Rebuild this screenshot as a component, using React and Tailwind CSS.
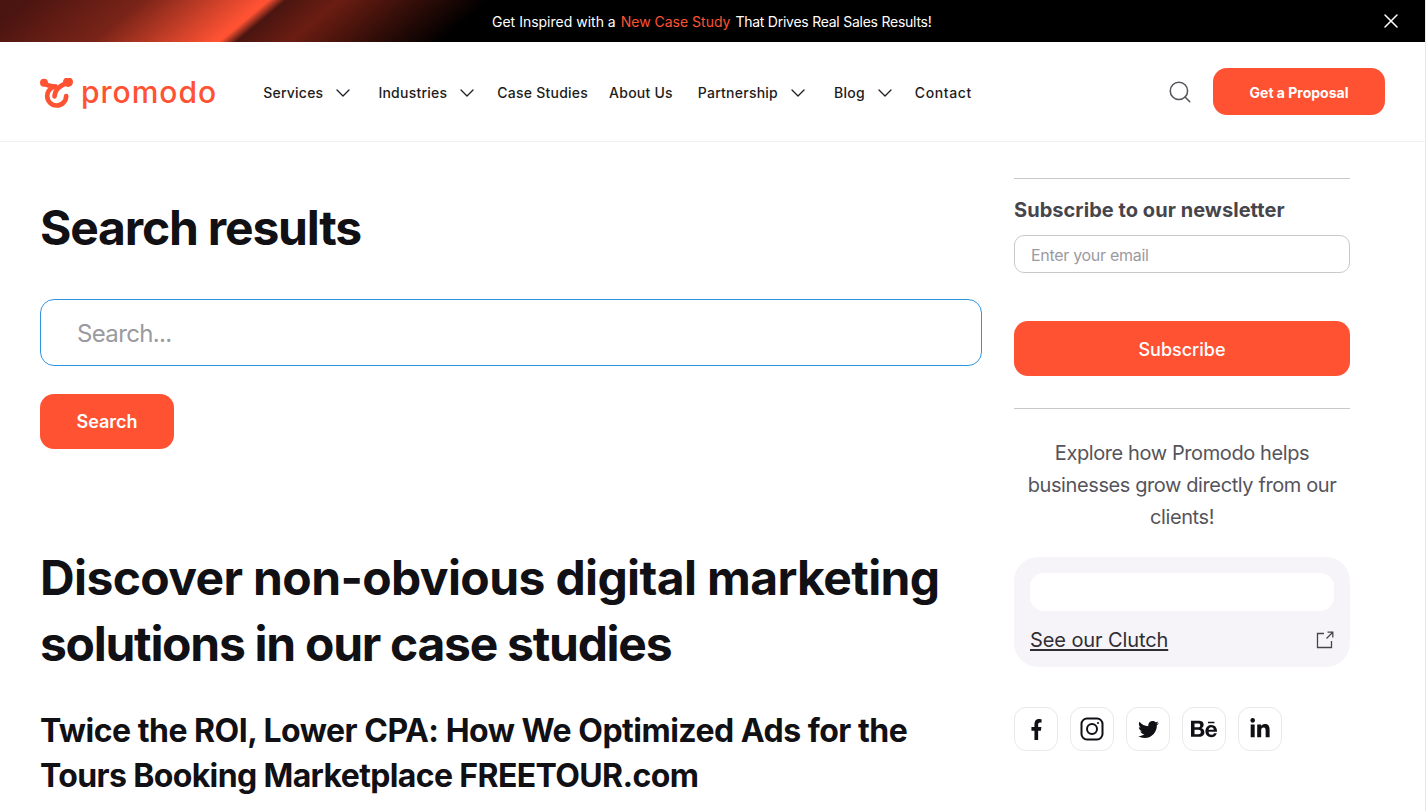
import React from 'react';
import { ChevronDown, Search, X } from 'lucide-react';
import { FaFacebookF, FaTwitter, FaBehance, FaLinkedinIn } from 'react-icons/fa';

const NAV = [
  { label: 'Services', menu: true, gap: 'mr-[23px]' },
  { label: 'Industries', menu: true, gap: 'mr-[18px]' },
  { label: 'Case Studies', gap: 'mr-[21px]' },
  { label: 'About Us', gap: 'mr-[25px]' },
  { label: 'Partnership', menu: true, gap: 'mr-6' },
  { label: 'Blog', menu: true, gap: 'mr-[18px]' },
  { label: 'Contact', gap: 'tracking-[0.6px]' },
];

function Logo() {
  return (
    <a href="#" className="flex items-center gap-[6px] text-[#ff5233]">
      <svg width="36" height="30" viewBox="0 0 36 30" fill="none" className="ml-[-1px] mt-[2px]">
        <circle cx="5" cy="4.700" r="4" fill="currentColor" />
        <circle cx="29" cy="4" r="5" fill="currentColor" />
        <path d="M5 5c4 3.500 8 3.500 13 3.500A9.500 9.500 0 1 0 27.200 18" stroke="currentColor" strokeWidth="4.600" strokeLinecap="round" />
        <path d="M28 5c-6 2-12 6-12.500 13.500" stroke="currentColor" strokeWidth="4.600" strokeLinecap="round" />
      </svg>
      <span className="mt-[1px] text-[30px] leading-none font-medium tracking-[1px]">promodo</span>
    </a>
  );
}

function InstagramIcon() {
  return (
    <svg width="24" height="24" viewBox="0 0 24 24" fill="none" stroke="#111014" strokeWidth="2">
      <rect x="1.500" y="1.500" width="21" height="21" rx="5.500" />
      <circle cx="12" cy="12" r="5" />
      <circle cx="18" cy="6" r="1.100" fill="#111014" stroke="none" />
    </svg>
  );
}

function SocialLink({ children }) {
  return (
    <a href="#" className="flex h-11 w-11 items-center justify-center rounded-xl border border-[#e9e8ea] text-[#111014]">
      {children}
    </a>
  );
}

export default function App() {
  return (
    <div className="h-[811px] w-[1426px] overflow-hidden border-r border-[#e8e8e8] bg-white font-['Inter',sans-serif] text-[#111014]">
      {/* TOP BANNER */}
      <div className="flex h-[42px] items-center bg-[linear-gradient(140deg,#4a1410_16px,#7a2418_92px,#ff5233_170px,#ff5233_173px,#4a1510_184px,#6b1d12_218px,#000000_315px)] pl-[492px] pr-[22px] text-white">
        <p className="mt-[2px] flex-1 text-sm">
          Get Inspired with a <span className="ml-[1px] mr-[1px] text-[#ff5233]">New Case Study</span> <span className="tracking-[-0.25px]">That Drives Real Sales Results!</span>
        </p>
        <X size={24} strokeWidth={1.500} />
      </div>

      {/* HEADER */}
      <header className="flex h-[100px] items-center border-b border-[#f1f0f2] pl-10 pr-10">
        <Logo />
        <nav className="ml-[46px] mt-[2px] flex flex-1 items-center text-sm font-medium tracking-[0.24px] text-[#1d1c20]">
          {NAV.map((item) => (
            <a key={item.label} href="#" className={`flex items-center gap-2 ${item.gap}`}>
              {item.label}
              {item.menu && <ChevronDown size={24} strokeWidth={1.300} />}
            </a>
          ))}
        </nav>
        <Search size={26} strokeWidth={1.400} className="mr-[20px] text-[#55545b]" />
        <a href="#" className="flex h-[47px] w-[172px] items-center justify-center rounded-[14px] bg-[#ff5233] pt-[2px] text-sm font-bold text-white">
          Get a Proposal
        </a>
      </header>

      <div className="flex gap-8 pl-10">
        {/* MAIN COLUMN */}
        <main className="w-[942px]">
          <h1 className="mt-[58px] text-[48px] leading-[56px] font-bold tracking-[-1.200px]">Search results</h1>
          <input
            placeholder="Search..."
            className="mt-[43px] block h-[67px] w-full rounded-[14px] border border-[#2f95e0] px-9 pt-[2px] text-2xl tracking-[-0.65px] outline-none placeholder:text-[#9b9aa0]"
          />
          <button className="mt-7 h-[55px] w-[134px] rounded-[14px] bg-[#ff5233] text-lg font-semibold text-white">Search</button>
          <h2 className="mt-[96px] text-[48px] leading-[66px] font-bold tracking-[-0.630px]">
            Discover non-obvious digital marketing
            <br />
            <span className="tracking-[-1.280px]">solutions in our case studies</span>
          </h2>
          <h3 className="mt-[31px] text-[32px] leading-[45px] font-bold tracking-[-0.500px]">
            Twice the ROI, Lower CPA: How We Optimized Ads for the
            <br />
            <span className="tracking-[-0.630px]">Tours Booking Marketplace FREETOUR.com</span>
          </h3>
        </main>

        {/* SIDEBAR */}
        <aside className="mt-9 w-[336px]">
          <div className="border-t border-[#c9c8cc] pt-[18px]">
            <h4 className="text-xl leading-[26px] font-bold tracking-[0.05px] text-[#46454c]">Subscribe to our newsletter</h4>
            <input
              placeholder="Enter your email"
              className="mt-3 block h-[38px] w-full rounded-[10px] border border-[#c9c8cc] pt-[2px] px-4 text-base tracking-[-0.3px] outline-none placeholder:text-[#9b9aa0]"
            />
            <button className="mt-12 h-[55px] w-full rounded-[14px] bg-[#ff5233] pt-[2px] text-lg font-medium text-white">Subscribe</button>
          </div>
          <div className="mt-8 border-t border-[#c9c8cc] pt-7">
            <p className="text-center text-xl leading-8 tracking-[-0.4px] text-[#55545b]">
              Explore how Promodo helps
              <br />
              businesses grow directly from our
              <br />
              clients!
            </p>
          </div>
          <div className="mt-6 rounded-[24px] bg-[#f6f4f8] px-4 pt-4 pb-[15px]">
            <div className="h-[38px] rounded-[14px] bg-white" />
            <div className="mt-[17px] flex items-center justify-between">
              <a href="#" className="text-xl leading-6 tracking-[-0.1px] text-[#2f2e34] underline underline-offset-2">See our Clutch</a>
              <svg width="18" height="18" viewBox="0 0 18 18" fill="none" stroke="#46454c" strokeWidth="1.300">
                <path d="M8 2.500H1.500v14h14V10M10.500 7.500l6-6M11.500 1.200h5.300v5.300" />
              </svg>
            </div>
          </div>
          <div className="mt-10 flex gap-3">
            <SocialLink><FaFacebookF size={21} className="scale-x-90" /></SocialLink>
            <SocialLink><InstagramIcon /></SocialLink>
            <SocialLink><FaTwitter size={21} /></SocialLink>
            <SocialLink><FaBehance size={26} /></SocialLink>
            <SocialLink><FaLinkedinIn size={22} /></SocialLink>
          </div>
        </aside>
      </div>
    </div>
  );
}
